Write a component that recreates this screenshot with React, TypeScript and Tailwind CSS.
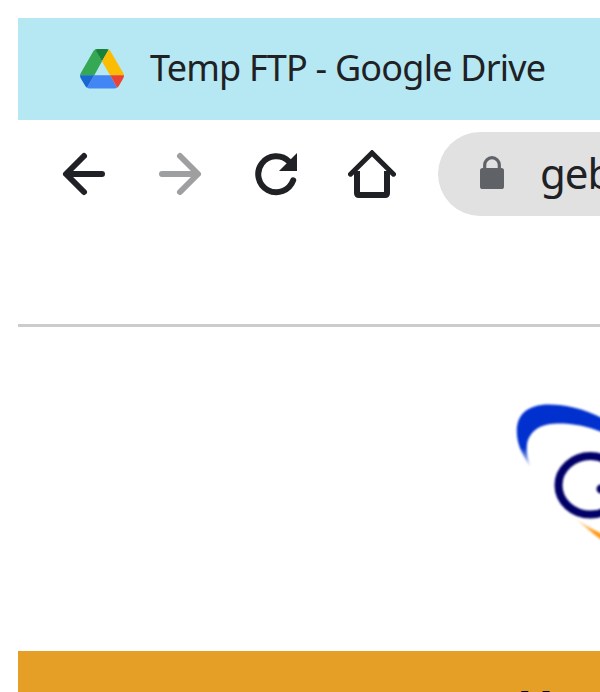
import React from "react";

function DriveLogo() {
  return (
    <svg className="h-10 w-11 shrink-0" viewBox="80 49 44 40">
      <path d="M102 61.3 94.2 75.5H80.2Q80 74.3 80.8 73L93.3 51.3Q94 50.1 95.4 49.3Z" fill="#34a853" />
      <path d="M95.2 49.4Q96 49 97.5 49H106.5Q108 49 108.8 49.4L102 61.3Z" fill="#188038" />
      <path d="M108.8 49.4Q109.8 50 110.5 51.2L123.2 73Q124 74.4 124 75.5H110.2L102 61.3Z" fill="#fbbc04" />
      <path d="M94.2 75.3H110.2L117 87.8Q116 88.4 114.5 88.4H89.5Q88.2 88.4 87 87.8Z" fill="#4285f4" />
      <path d="M80 75.3H94.2L87 87.8Q86 87.2 85.3 86L80.7 78.2Q80 77 80 75.3Z" fill="#1967d2" />
      <path d="M110.2 75.3H124Q124 77 123.3 78.2L118.8 86Q118 87.2 117 87.8Z" fill="#ea4335" />
    </svg>
  );
}

function Arrow({ forward = false }: { forward?: boolean }) {
  return (
    <svg
      className={forward ? "h-12 w-12 -scale-x-100 text-[#9e9fa0]" : "h-12 w-12 text-[#202124]"}
      viewBox="60 150 48 48"
      fill="none"
      stroke="currentColor"
      strokeWidth="6"
      strokeLinecap="round"
      strokeLinejoin="round"
    >
      <path d="M102 174H67M84 156 66 174l18 18" />
    </svg>
  );
}

function Reload() {
  return (
    <svg className="h-12 w-12 text-[#202124]" viewBox="252 150 48 48">
      <path d="M293.2 180.3A18 18 0 1 1 289 161.5" fill="none" stroke="currentColor" strokeWidth="6" strokeLinecap="round" />
      <path d="M297 153v18h-18z" fill="currentColor" />
    </svg>
  );
}

function Home() {
  return (
    <svg className="h-12 w-12 text-[#202124]" viewBox="348 150 48 48" fill="none" stroke="currentColor">
      <path d="M350.5 174.2 372 152.9 393.5 174.2" strokeWidth="5" strokeLinecap="round" strokeLinejoin="miter" />
      <path d="M357 171v22q0 2 2 2h26q2 0 2-2v-22" strokeWidth="6" />
    </svg>
  );
}

function Lock() {
  return (
    <svg className="h-9 w-6 shrink-0" viewBox="480 156 24 36">
      <path d="M484.7 169v-4a7.3 7.3 0 0 1 14.6 0v4" fill="none" stroke="#5f6368" strokeWidth="3.2" />
      <rect x="480" y="168" width="24" height="21" rx="2.6" fill="#5f6368" />
    </svg>
  );
}

function SiteLogo() {
  return (
    <svg className="h-[160px] w-[100px]" viewBox="500 390 100 160">
      <defs>
        <linearGradient id="tail" x1="0" y1="448" x2="0" y2="468" gradientUnits="userSpaceOnUse">
          <stop stopColor="#0030ce" />
          <stop offset="1" stopColor="#0030ce" stopOpacity="0" />
        </linearGradient>
        <linearGradient id="beak" x1="574" y1="518" x2="594" y2="534" gradientUnits="userSpaceOnUse">
          <stop stopColor="#ff9b20" stopOpacity="0.1" />
          <stop offset="1" stopColor="#ff9918" />
        </linearGradient>
        <filter id="soft" x="500" y="390" width="120" height="160" filterUnits="userSpaceOnUse" colorInterpolationFilters="sRGB">
          <feGaussianBlur stdDeviation="0.9" />
        </filter>
      </defs>
      <g filter="url(#soft)">
        <path d="M608 421C586 409 566 404.5 549 404.5C527 404.5 516.8 415 516.8 431C516.8 443 521 453 531 468C525.5 454 525.5 442 530 436C535 427.5 545 423.5 558 423.5C576 423.5 588 426.5 608 434.5Z" fill="url(#tail)" />
        <ellipse cx="590.5" cy="485.3" rx="32" ry="29.2" fill="none" stroke="#000068" strokeWidth="8" />
        <circle cx="601" cy="489" r="4.5" fill="#000068" />
        <path d="M574 517.5Q586 526 606 536V543.5Q589 531 574 517.5Z" fill="url(#beak)" />
      </g>
    </svg>
  );
}

export default function App() {
  return (
    <div className="flex h-[692px] w-[600px] flex-col overflow-hidden bg-white pl-[18px] pt-[18px] font-['Noto_Sans','Open_Sans',sans-serif] text-[#202124]">
      <header className="flex h-[102px] shrink-0 items-center bg-[#b5e8f3] pl-[62px]">
        <DriveLogo />
        <span className="ml-[26px] whitespace-nowrap pb-0.5 text-[36px] leading-[48px] tracking-[-0.8px]">Temp FTP - Google Drive</span>
      </header>
      <nav className="flex h-[108px] shrink-0 items-center pl-[42px]">
        <div className="flex shrink-0 gap-12">
          <Arrow />
          <Arrow forward />
          <Reload />
          <Home />
        </div>
        <div className="ml-[42px] flex h-[84px] w-[200px] shrink-0 items-center rounded-l-full bg-[#e1e1e1] pl-[42px]">
          <Lock />
          <span className="ml-9 whitespace-nowrap pb-0.5 text-[42px] leading-[56px] tracking-[-1px]">geb</span>
        </div>
      </nav>
      <main className="mt-24 flex shrink-0 flex-col border-t-[3px] border-[#cccccc]">
        <section className="flex h-[324px] shrink-0 justify-end pt-[63px]">
          <SiteLogo />
        </section>
        <div className="h-[41px] overflow-hidden bg-[#e59f27] pl-[500px] pt-[33px] font-['Liberation_Sans',Arial,sans-serif] text-[48px] font-bold leading-[48px] text-black">
          H
        </div>
      </main>
    </div>
  );
}
